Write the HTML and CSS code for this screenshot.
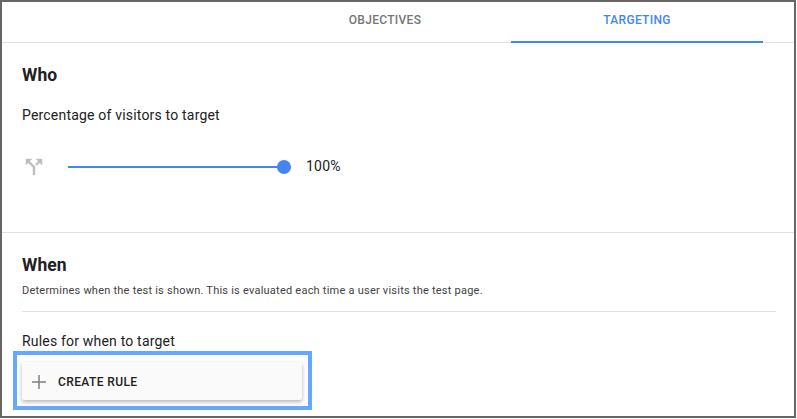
FILE: index.html
```html
<!DOCTYPE html>
<html lang="en">
<head>
<meta charset="utf-8">
<title>Targeting</title>
<link rel="stylesheet" href="styles.css">
</head>
<body>
<div class="frame">
  <nav class="tabs">
    <div class="tab">OBJECTIVES</div>
    <div class="tab tab-active">TARGETING</div>
  </nav>
  <section class="who">
    <h2 class="heading">Who</h2>
    <p class="label">Percentage of visitors to target</p>
    <div class="slider-row">
      <svg class="split-icon" width="24" height="24" viewBox="0 0 24 24" aria-hidden="true">
        <path d="M14 4l2.290 2.290-2.880 2.880 1.420 1.420 2.880-2.880L20 10V4zm-4 0H4v6l2.290-2.290 4.710 4.700V20h2v-8.410l-5.290-5.300z" fill="#bdbdbd" stroke="#bdbdbd" stroke-width="0.4"/>
      </svg>
      <div class="track"><span class="thumb"></span></div>
      <span class="value">100%</span>
    </div>
  </section>
  <section class="when">
    <h2 class="heading">When</h2>
    <p class="desc">Determines when the test is shown. This is evaluated each time a user visits the test page.</p>
    <hr class="rule">
    <p class="label">Rules for when to target</p>
    <div class="highlight">
      <button class="create" type="button">
        <svg class="plus" width="14" height="14" viewBox="0 0 14 14" aria-hidden="true"><path d="M6.250 0h1.500v6.250H14v1.500H7.750V14h-1.500V7.750H0v-1.500h6.250z" fill="#808080"/></svg>
        <span>CREATE RULE</span>
      </button>
    </div>
  </section>
</div>
</body>
</html>
```
FILE: styles.css
```css
* { box-sizing: border-box; }
html, body { margin: 0; padding: 0; background: #fff; }
body { width: 797px; height: 419px; overflow: hidden; font-family: Roboto, "Liberation Sans", sans-serif; color: #212121; }
.frame { width: 796px; height: 418px; border: 2px solid #666; background: #fff; overflow: hidden; }
.tabs { display: flex; justify-content: flex-end; height: 41px; padding-right: 31px; border-bottom: 1px solid #e0e0e0; }
.tab { width: 252px; height: 41px; padding-top: 10px; text-align: center; font-size: 12px; line-height: 16px; font-weight: 500; letter-spacing: 0.3px; color: #757575; }
.tab-active { color: #4285f4; border-bottom: 2px solid #4285f4; }
.who { height: 190px; padding: 22px 20px 0; border-bottom: 1px solid #e0e0e0; }
.heading { margin: 0; font-size: 17.500px; line-height: 20px; font-weight: 700; letter-spacing: 0.1px; color: #212121; }
.label { margin: 0; font-size: 14px; line-height: 18px; letter-spacing: 0.19px; color: #212121; }
.who .label { margin-top: 21px; }
.slider-row { display: flex; align-items: center; margin-top: 33px; height: 20px; }
.split-icon { flex: none; }
.track { position: relative; width: 216px; height: 2px; margin-left: 22px; background: #4285f4; }
.thumb { position: absolute; right: -7px; top: -6px; width: 14px; height: 14px; border-radius: 50%; background: #4285f4; }
.value { margin: 0 0 2px 22px; font-size: 14px; line-height: 18px; letter-spacing: 0.2px; }
.when { padding: 22px 0 0 20px; }
.desc { margin: 9px 0 0; font-size: 11px; line-height: 14px; letter-spacing: 0.23px; color: #424242; }
.rule { margin: 13px 18px 0 0; border: 0; height: 1px; background: #e0e0e0; }
.when .label { margin-top: 20px; }
.highlight { width: 299px; height: 59px; margin: 1px 0 0 -9px; padding: 7px 6px 0 5px; border: 4px solid #64a8ff; }
.create { display: flex; align-items: center; width: 280px; height: 38px; padding: 2px 0 0 10px; border: 0; border-radius: 2px; background: #fafafa; box-shadow: 0 2px 4px rgba(0,0,0,.3); font-family: inherit; font-size: 12px; font-weight: 500; letter-spacing: 0.4px; color: #212121; }
.plus { flex: none; margin-right: 12px; }
```
